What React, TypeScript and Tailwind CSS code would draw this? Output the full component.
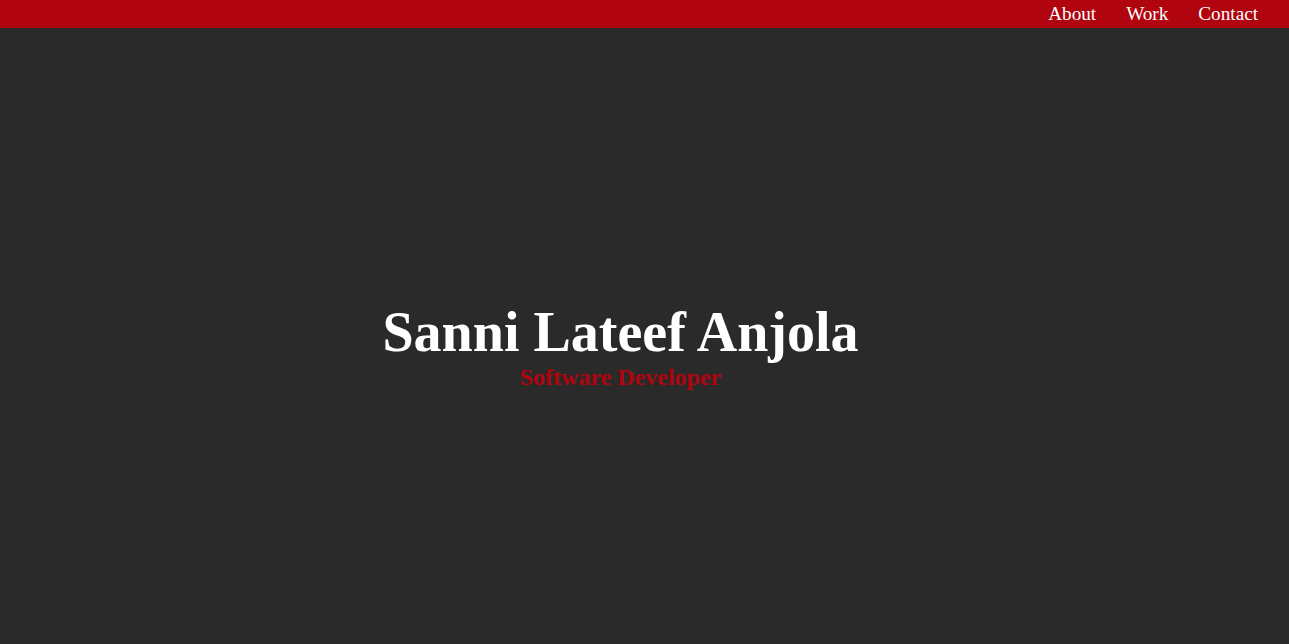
export default function App() {
  return (
    <div className="min-h-screen bg-[#2a2a2a] flex flex-col font-['Liberation_Serif','Times_New_Roman',serif]">
      <nav className="h-[28px] bg-[#b0040f] flex justify-end items-center pr-[16px]">
        <a className="px-[15px] text-[19.2px] leading-none text-white">About</a>
        <a className="px-[15px] text-[19.2px] leading-none text-white">Work</a>
        <a className="px-[15px] text-[19.2px] leading-none text-white">Contact</a>
      </nav>
      <main className="flex-1 flex flex-col items-center justify-center pr-[48px] pt-[20px]">
        <h1 className="text-[56px] font-bold leading-[1.1] text-white">Sanni Lateef Anjola</h1>
        <h2 className="text-[24px] font-bold leading-[1.1] text-[#b0040f]">Software Developer</h2>
      </main>
    </div>
  );
}
